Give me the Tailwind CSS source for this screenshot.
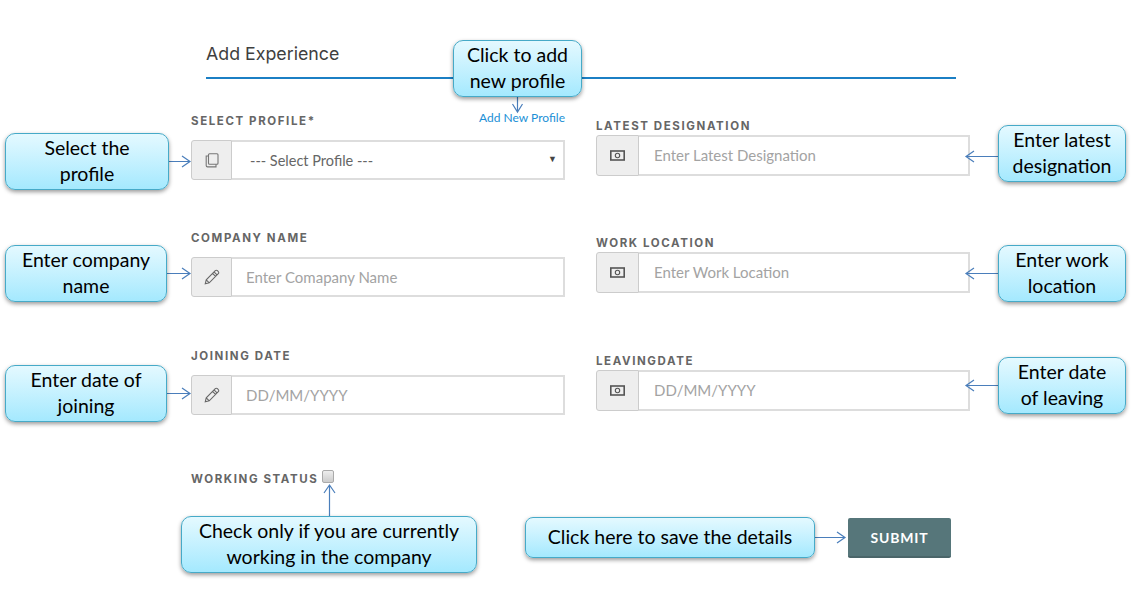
<!DOCTYPE html>
<html lang="en">
<head>
<meta charset="UTF-8">
<title>Add Experience</title>
<script src="https://cdn.jsdelivr.net/npm/@tailwindcss/browser@4"></script>
</head>
<body class="bg-white font-['Lato',sans-serif]">
<div class="relative w-[1134px] h-[603px] overflow-hidden">

  <!-- form -->
  <div class="pl-[191px]">
    <div class="ml-[15px] w-[750px] pt-[43px] h-[79px] border-b-2 border-[#1b7fc4]">
      <h1 class="font-['Inter',sans-serif] text-[17.800px] leading-[22px] font-normal text-[#3f3f3f]">Add Experience</h1>
    </div>

    <div class="flex gap-[31px]">
      <!-- left column -->
      <div class="w-[374px] pt-[31px]">
        <div>
          <div class="flex justify-between h-[20px] mb-[10px]">
            <label class="font-['Inter',sans-serif] text-[11.500px] leading-[22px] font-bold tracking-[1.600px] text-[#666]">SELECT PROFILE*</label>
            <a class="text-[12px] leading-[16px] text-[#1b8fd6]">Add New Profile</a>
          </div>
          <div class="flex h-[40px]">
            <span class="w-[41px] flex items-center justify-center bg-[#eee] border border-[#ccc] rounded-l-[3px]">
              <svg width="14" height="15" viewBox="0 0 14 15" fill="none" stroke="#777" stroke-width="1.100"><rect x="3.500" y="0.700" width="9.500" height="10.500" rx="1"/><path d="M3.500 3H1.200v9.600a1.300 1.300 0 0 0 1.300 1.300H11v-2.700"/></svg>
            </span>
            <div class="relative flex-1 border-2 border-l-0 border-[#ddd]">
              <select class="w-full h-full pl-[18px] pt-[2px] appearance-none bg-white text-[14.500px] text-[#666] outline-none"><option>--- Select Profile ---</option></select>
              <span class="absolute right-[6px] top-[10px] text-[9px] leading-[14px] text-[#444]">▼</span>
            </div>
          </div>
        </div>

        <div class="mt-[47px]">
          <label class="block font-['Inter',sans-serif] h-[20px] mb-[10px] text-[11.500px] leading-[22px] font-bold tracking-[1.600px] text-[#666]">COMPANY NAME</label>
          <div class="flex h-[40px]">
            <span class="w-[41px] flex items-center justify-center bg-[#eee] border border-[#ccc] rounded-l-[3px]">
              <svg width="16" height="16" viewBox="0 0 15 15" fill="none" stroke="#666" stroke-width="1"><path d="M1.200 13.800l.9-3.700L10.600 1.600a1.400 1.400 0 0 1 2 0l.8.800a1.400 1.400 0 0 1 0 2L4.900 12.900zM2.100 10.100l2.800 2.800M9.400 2.800l2.800 2.800M8 4.200l2.800 2.800"/></svg>
            </span>
            <input class="flex-1 min-w-0 border-2 border-l-0 border-[#ddd] pl-[14px] text-[15px] placeholder:text-[#a3a3a3] outline-none" placeholder="Enter Comapany Name">
          </div>
        </div>

        <div class="mt-[48px]">
          <label class="block font-['Inter',sans-serif] h-[20px] mb-[10px] text-[11.500px] leading-[22px] font-bold tracking-[1.600px] text-[#666]">JOINING DATE</label>
          <div class="flex h-[40px]">
            <span class="w-[41px] flex items-center justify-center bg-[#eee] border border-[#ccc] rounded-l-[3px]">
              <svg width="16" height="16" viewBox="0 0 15 15" fill="none" stroke="#666" stroke-width="1"><path d="M1.200 13.800l.9-3.700L10.600 1.600a1.400 1.400 0 0 1 2 0l.8.800a1.400 1.400 0 0 1 0 2L4.900 12.900zM2.100 10.100l2.800 2.800M9.400 2.800l2.800 2.800M8 4.200l2.800 2.800"/></svg>
            </span>
            <input class="flex-1 min-w-0 border-2 border-l-0 border-[#ddd] pl-[14px] text-[15px] placeholder:text-[#a3a3a3] outline-none" placeholder="DD/MM/YYYY">
          </div>
        </div>

        <div class="mt-[55px] flex items-start gap-[4px]">
          <label class="font-['Inter',sans-serif] mt-[1px] text-[11.500px] leading-[16px] font-bold tracking-[1.600px] text-[#666]">WORKING STATUS</label>
          <input type="checkbox" class="appearance-none w-[12px] h-[13px] rounded-[2px] border border-[#aaa] bg-gradient-to-b from-[#eee] to-[#ccc]">
        </div>
      </div>

      <!-- right column -->
      <div class="w-[374px] pt-[39px]">
        <div>
          <label class="block font-['Inter',sans-serif] h-[14px] mb-[3px] text-[11.500px] leading-[16px] font-bold tracking-[1.600px] text-[#666]">LATEST DESIGNATION</label>
          <div class="flex h-[41px]">
            <span class="w-[43px] flex items-center justify-center bg-[#eee] border border-[#ccc] rounded-l-[3px]">
              <svg width="15" height="11" viewBox="0 0 15 11" fill="none" stroke="#555"><rect x="0.800" y="1" width="13.400" height="9" stroke-width="1.600"/><circle cx="7.500" cy="5.500" r="2.200" stroke-width="1.100"/></svg>
            </span>
            <input class="flex-1 min-w-0 border-2 border-l-0 border-[#ddd] pl-[15px] text-[15px] placeholder:text-[#a3a3a3] outline-none" placeholder="Enter Latest Designation">
          </div>
        </div>

        <div class="mt-[59px]">
          <label class="block font-['Inter',sans-serif] h-[14px] mb-[3px] text-[11.500px] leading-[16px] font-bold tracking-[1.600px] text-[#666]">WORK LOCATION</label>
          <div class="flex h-[41px]">
            <span class="w-[43px] flex items-center justify-center bg-[#eee] border border-[#ccc] rounded-l-[3px]">
              <svg width="15" height="11" viewBox="0 0 15 11" fill="none" stroke="#555"><rect x="0.800" y="1" width="13.400" height="9" stroke-width="1.600"/><circle cx="7.500" cy="5.500" r="2.200" stroke-width="1.100"/></svg>
            </span>
            <input class="flex-1 min-w-0 border-2 border-l-0 border-[#ddd] pl-[15px] text-[15px] placeholder:text-[#a3a3a3] outline-none" placeholder="Enter Work Location">
          </div>
        </div>

        <div class="mt-[60px]">
          <label class="block font-['Inter',sans-serif] h-[14px] mb-[3px] text-[11.500px] leading-[16px] font-bold tracking-[1.600px] text-[#666]">LEAVINGDATE</label>
          <div class="flex h-[41px]">
            <span class="w-[43px] flex items-center justify-center bg-[#eee] border border-[#ccc] rounded-l-[3px]">
              <svg width="15" height="11" viewBox="0 0 15 11" fill="none" stroke="#555"><rect x="0.800" y="1" width="13.400" height="9" stroke-width="1.600"/><circle cx="7.500" cy="5.500" r="2.200" stroke-width="1.100"/></svg>
            </span>
            <input class="flex-1 min-w-0 border-2 border-l-0 border-[#ddd] pl-[15px] text-[15px] placeholder:text-[#a3a3a3] outline-none" placeholder="DD/MM/YYYY">
          </div>
        </div>

        <div class="mt-[107px] ml-[252px]">
          <button class="w-[103px] h-[40px] rounded-[2px] bg-[#56767a] border-b-2 border-[#4a6569] text-white text-[14px] font-bold tracking-[0.800px]">SUBMIT</button>
        </div>
      </div>
    </div>
  </div>

  <!-- arrows over the form -->
  <svg class="absolute left-0 top-0 pointer-events-none" width="1134" height="603" fill="none" stroke="#4a7ebb" stroke-width="1.200">
    <path d="M168 161.500H190M182 156l8 5.500-8 5.500"/>
    <path d="M167 273.500H190M182 268l8 5.500-8 5.500"/>
    <path d="M167 393.500H190M182 388l8 5.500-8 5.500"/>
    <path d="M998 156.500H966M974 151l-8 5.500 8 5.500"/>
    <path d="M998 273.500H966M974 268l-8 5.500 8 5.500"/>
    <path d="M998 385.500H966M974 380l-8 5.500 8 5.500"/>
    <path d="M329.500 516V485M324 493l5.500-8 5.500 8"/>
    <path d="M814 537.500H845M837 532l8 5.500-8 5.500"/>
    <path d="M517.500 97V112M512.500 104l5 8 5-8"/>
  </svg>

  <!-- callouts -->
  <div class="absolute left-[453px] top-[40px] w-[129px] h-[57px] pb-[1px] flex items-center justify-center text-center rounded-[10px] border border-[#46aac8] bg-gradient-to-b from-[#e4f9ff] to-[#a4e9fe] shadow-[0_2px_4px_rgba(0,0,0,0.4)] text-[19.500px] leading-[26px] text-black">Click to add<br>new profile</div>
  <div class="absolute left-[5px] top-[133px] w-[164px] h-[57px] pb-[1px] flex items-center justify-center text-center rounded-[10px] border border-[#46aac8] bg-gradient-to-b from-[#e4f9ff] to-[#a4e9fe] shadow-[0_2px_4px_rgba(0,0,0,0.4)] text-[19.500px] leading-[26px] text-black">Select the<br>profile</div>
  <div class="absolute left-[5px] top-[245px] w-[162px] h-[57px] pb-[1px] flex items-center justify-center text-center rounded-[10px] border border-[#46aac8] bg-gradient-to-b from-[#e4f9ff] to-[#a4e9fe] shadow-[0_2px_4px_rgba(0,0,0,0.4)] text-[19.500px] leading-[26px] text-black">Enter company<br>name</div>
  <div class="absolute left-[5px] top-[365px] w-[162px] h-[57px] pb-[1px] flex items-center justify-center text-center rounded-[10px] border border-[#46aac8] bg-gradient-to-b from-[#e4f9ff] to-[#a4e9fe] shadow-[0_2px_4px_rgba(0,0,0,0.4)] text-[19.500px] leading-[26px] text-black">Enter date of<br>joining</div>
  <div class="absolute left-[998px] top-[125px] w-[128px] h-[57px] pb-[1px] flex items-center justify-center text-center rounded-[10px] border border-[#46aac8] bg-gradient-to-b from-[#e4f9ff] to-[#a4e9fe] shadow-[0_2px_4px_rgba(0,0,0,0.4)] text-[19.500px] leading-[26px] text-black">Enter latest<br>designation</div>
  <div class="absolute left-[998px] top-[245px] w-[128px] h-[57px] pb-[1px] flex items-center justify-center text-center rounded-[10px] border border-[#46aac8] bg-gradient-to-b from-[#e4f9ff] to-[#a4e9fe] shadow-[0_2px_4px_rgba(0,0,0,0.4)] text-[19.500px] leading-[26px] text-black">Enter work<br>location</div>
  <div class="absolute left-[998px] top-[357px] w-[128px] h-[57px] pb-[1px] flex items-center justify-center text-center rounded-[10px] border border-[#46aac8] bg-gradient-to-b from-[#e4f9ff] to-[#a4e9fe] shadow-[0_2px_4px_rgba(0,0,0,0.4)] text-[19.500px] leading-[26px] text-black">Enter date<br>of leaving</div>
  <div class="absolute left-[181px] top-[516px] w-[296px] h-[57px] pb-[1px] flex items-center justify-center text-center rounded-[10px] border border-[#46aac8] bg-gradient-to-b from-[#e4f9ff] to-[#a4e9fe] shadow-[0_2px_4px_rgba(0,0,0,0.4)] text-[19.500px] leading-[26px] text-black">Check only if you are currently<br>working in the company</div>
  <div class="absolute left-[525px] top-[517px] w-[290px] h-[41px] pb-[1px] flex items-center justify-center text-center rounded-[8px] border border-[#46aac8] bg-gradient-to-b from-[#e4f9ff] to-[#a4e9fe] shadow-[0_2px_4px_rgba(0,0,0,0.4)] text-[19.500px] leading-[26px] text-black">Click here to save the details</div>
</div>
</body>
</html>
